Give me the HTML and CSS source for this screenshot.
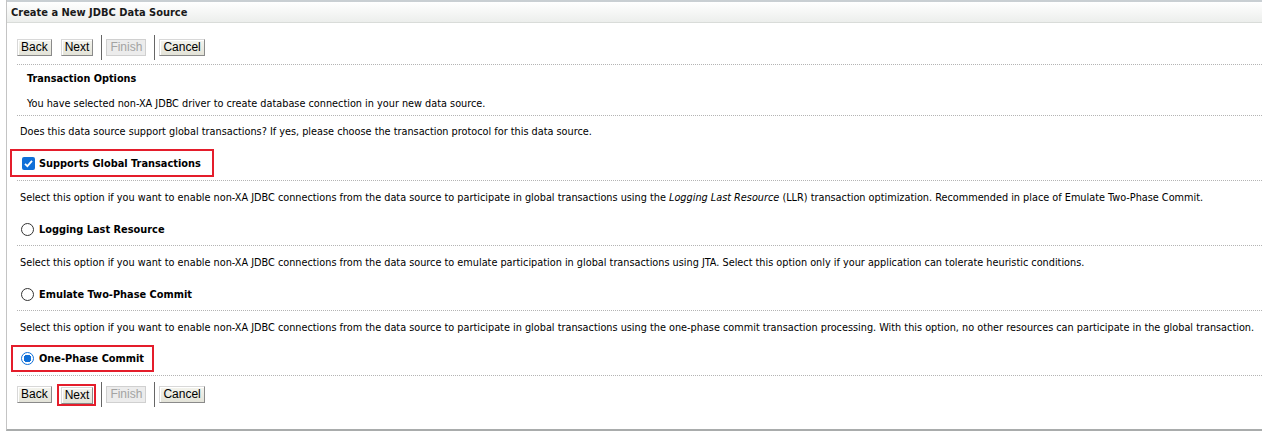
FILE: index.html
```html
<!DOCTYPE html>
<html>
<head>
<meta charset="utf-8">
<link rel="stylesheet" href="styles.css">
</head>
<body>
<div class="frame">
  <div class="header">Create a New JDBC Data Source</div>
  <div class="content">
    <div class="toolbar">
      <button class="btn">Back</button>
      <button class="btn">Next</button>
      <span class="sep"></span>
      <button class="btn" disabled>Finish</button>
      <span class="sep"></span>
      <button class="btn">Cancel</button>
    </div>
    <div class="intro">
      <div class="title">Transaction Options</div>
      <div class="intro-text">You have selected non-XA JDBC driver to create database connection in your new data source.</div>
    </div>
    <div class="global">
      <div class="question">Does this data source support global transactions? If yes, please choose the transaction protocol for this data source.</div>
      <div class="opt-first">
        <label class="opt hl hl-check"><span class="check"><svg width="13" height="13" viewBox="0 0 13 13"><rect x="0" y="0" width="13" height="13" rx="2" fill="#0f6fd8"/><path d="M3 6.8 L5.4 9.2 L10 3.8" fill="none" stroke="#fff" stroke-width="1.8"/></svg></span>Supports Global Transactions</label>
      </div>
    </div>
    <div class="section">
      <div class="desc">Select this option if you want to enable non-XA JDBC connections from the data source to participate in global transactions using the <i>Logging Last Resource</i> (LLR) transaction optimization. Recommended in place of Emulate Two-Phase Commit.</div>
      <div class="opt-row"><label class="opt"><span class="radio"></span>Logging Last Resource</label></div>
    </div>
    <div class="section">
      <div class="desc">Select this option if you want to enable non-XA JDBC connections from the data source to emulate participation in global transactions using JTA. Select this option only if your application can tolerate heuristic conditions.</div>
      <div class="opt-row"><label class="opt"><span class="radio"></span>Emulate Two-Phase Commit</label></div>
    </div>
    <div class="section">
      <div class="desc">Select this option if you want to enable non-XA JDBC connections from the data source to participate in global transactions using the one-phase commit transaction processing. With this option, no other resources can participate in the global transaction.</div>
      <div class="opt-row"><label class="opt hl hl-radio"><span class="radio on"></span>One-Phase Commit</label></div>
    </div>
    <div class="toolbar bottom">
      <button class="btn">Back</button>
      <span class="hl-btn"><button class="btn">Next</button></span>
      <span class="sep"></span>
      <button class="btn" disabled>Finish</button>
      <span class="sep"></span>
      <button class="btn">Cancel</button>
    </div>
  </div>
</div>
</body>
</html>
```

FILE: styles.css
```css
html, body {
  margin: 0;
  padding: 0;
  background: #fff;
}
body {
  font-family: "DejaVu Sans Condensed", "DejaVu Sans", sans-serif;
  font-size: 10.8px;
  color: #000;
}
.frame {
  margin-left: 6px;
  height: 429px;
  border-left: 1px solid #c4c4c4;
  border-bottom: 2px solid #a9acac;
  box-sizing: content-box;
}
.header {
  height: 20px;
  line-height: 21px;
  border-top: 2px solid #c9cfd3;
  border-bottom: 1px solid #d9dcd9;
  background: linear-gradient(#ffffff, #eceeec);
  font-weight: bold;
  font-size: 11px;
  padding-left: 4px;
  color: #1a1a1a;
}
.content {
  padding-left: 10px;
}
.toolbar {
  display: flex;
  align-items: center;
  height: 25px;
  padding: 12px 0 4px 0;
  border-bottom: 1px dotted #b4b4b4;
}
.toolbar.bottom {
  border-bottom: none;
  padding-top: 6px;
}
.btn {
  font-family: "Liberation Sans", Arial, sans-serif;
  font-size: 12px;
  height: 17px;
  padding: 0 3px;
  margin: 0 9px 0 0;
  color: #000;
  background: linear-gradient(#f4f4ee, #e3e3d8);
  border: 1px solid;
  border-color: #d8d8d8 #8a8a8a #8a8a8a #d8d8d8;
  line-height: 15px;
  box-shadow: inset 1px 1px 0 #fff;
}
.btn[disabled] {
  color: #a3a3a3;
  background: #ececec;
  border-color: #d0d0d0;
  box-shadow: none;
}
.sep {
  width: 1px;
  height: 25px;
  background: #666;
  margin: 0 4px 0 -1px;
}
.hl-btn {
  display: inline-flex;
  border: 2px solid #e41d2b;
  margin: 0 6px 0 -4px;
  padding: 1px 1px 0 2px;
}
.hl-btn .btn {
  margin: 0;
}
.intro {
  border-bottom: 1px dotted #b4b4b4;
  padding-left: 10px;
}
.title {
  font-weight: bold;
  line-height: 23px;
  padding-top: 2px;
}
.intro-text {
  line-height: 22px;
  padding-top: 3px;
}
.global {
  border-bottom: 1px dotted #b4b4b4;
}
.question {
  line-height: 25px;
  padding-top: 3px;
  padding-left: 3px;
}
.opt-first {
  height: 36px;
  display: flex;
  align-items: center;
}
.section {
  border-bottom: 1px dotted #b4b4b4;
}
.desc {
  line-height: 27px;
  padding-top: 3px;
  padding-left: 3px;
  white-space: nowrap;
}
.opt-row {
  height: 32px;
  padding-top: 2px;
  display: flex;
  align-items: center;
}
.opt {
  display: inline-flex;
  align-items: center;
  font-weight: bold;
  font-size: 10.9px;
  padding-left: 4px;
}
.check {
  display: inline-flex;
  width: 13px;
  height: 13px;
  margin-right: 4px;
}
.radio {
  display: inline-block;
  width: 11px;
  height: 11px;
  border: 1px solid #333;
  border-radius: 50%;
  margin-right: 5px;
  background: #fff;
  box-sizing: content-box;
}
.radio.on {
  border-color: #0f6fd8;
  background: radial-gradient(circle, #0f6fd8 0 3.6px, #fff 4px);
}
.hl {
  border: 2px solid #e41d2b;
}
.hl-check {
  margin-left: -7px;
  padding: 1px 11px 0 10px;
  height: 23px;
  margin-top: 1px;
}
.hl-radio {
  margin-left: -6px;
  padding: 0 8px 0 8px;
  height: 23px;
  margin-top: -1px;
}
```
